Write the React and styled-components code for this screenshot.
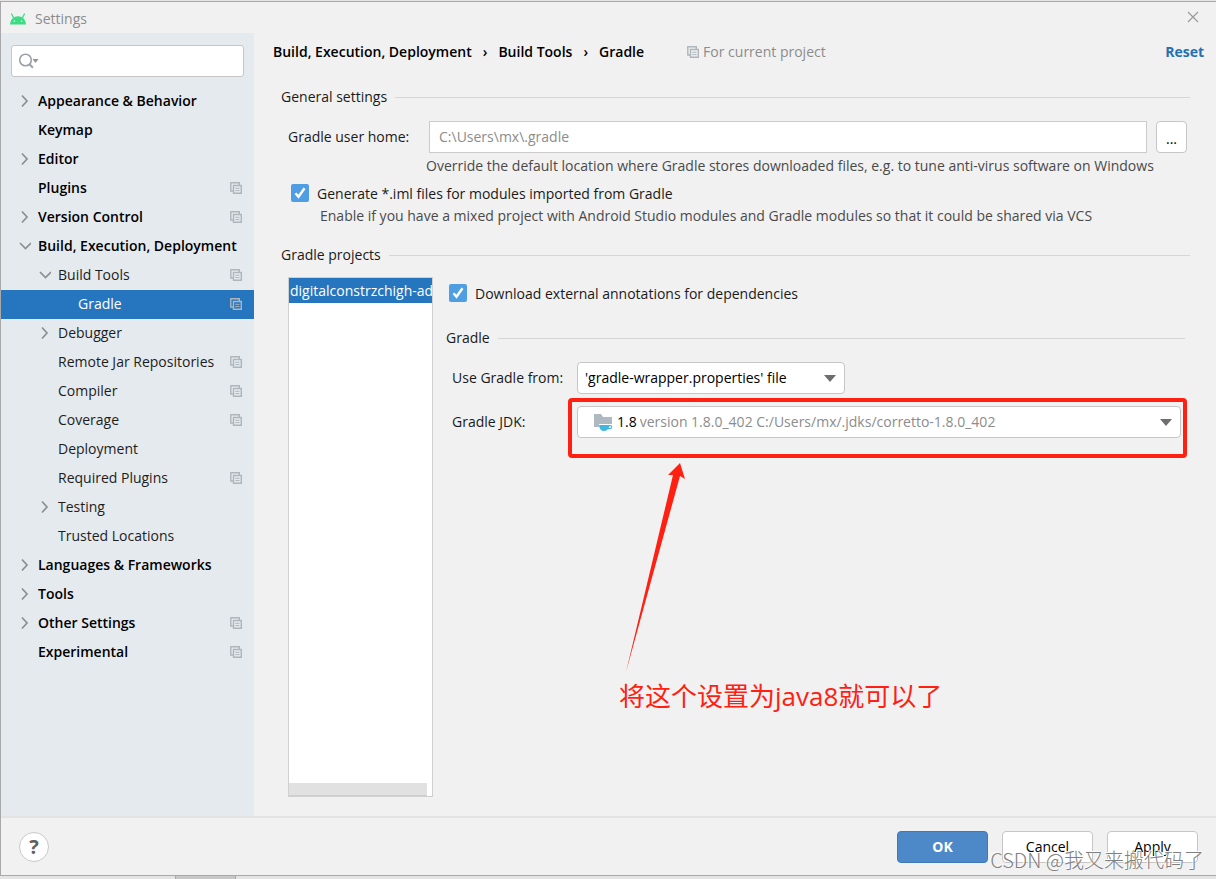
import React from "react";
import styled, { createGlobalStyle, css } from "styled-components";

const GlobalStyle = createGlobalStyle`
  *, *::before, *::after { box-sizing: border-box; }
  body {
    margin: 0;
    background: #e4e4e4;
    color: #1a1a1a;
    font: 14px/20px "Open Sans", "Noto Sans CJK SC", sans-serif;
  }
  button, input, select { font: inherit; color: inherit; margin: 0; }
`;

const Desktop = styled.div`
  min-height: 100vh;
  padding-top: 1px;
  display: flex;
  flex-direction: column;
`;

const Dialog = styled.div`
  flex: 1;
  display: flex;
  flex-direction: column;
  background: #f1f1f1;
  border: 1px solid #a9a9a9;
  border-right: 0;
`;

const TaskStrip = styled.div`
  height: 3px;
  padding-left: 175px;
`;

const TaskSlot = styled.div`
  width: 61px;
  height: 3px;
  background: #c8c8c8;
  border: solid #a9a9a9;
  border-width: 0 1px;
`;

const TitleBar = styled.header`
  height: 31px;
  padding: 0 17px 2px 8px;
  display: flex;
  align-items: center;
  justify-content: space-between;
`;

const TitleText = styled.h1`
  margin: 0;
  display: flex;
  align-items: center;
  gap: 8px;
  font-size: 14px;
  font-weight: 400;
  color: #8c8c8c;
  padding-top: 4px;
`;

const PlainButton = styled.button`
  border: 0;
  padding: 0;
  background: none;
  display: flex;
  cursor: pointer;
`;

const Body = styled.div`
  flex: 1;
  display: flex;
`;

const Sidebar = styled.nav`
  width: 253px;
  flex: none;
  padding-top: 12px;
  background: #e5eaee;
`;

const SearchBox = styled.label`
  height: 32px;
  margin: 0 10px 10px;
  padding-left: 6px;
  display: flex;
  align-items: center;
  background: #fff;
  border: 1px solid #c6c6c6;
  border-radius: 3px;
`;

const SearchInput = styled.input`
  flex: 1;
  min-width: 0;
  border: 0;
  outline: 0;
  background: none;
`;

const Tree = styled.ul`
  list-style: none;
  margin: 0;
  padding: 0;
`;

const TreeRow = styled.li`
  height: 29px;
  padding: 0 12px 2px ${(p) => 14 + p.$level * 20}px;
  display: flex;
  align-items: center;
  white-space: nowrap;
  font-weight: ${(p) => (p.$level === 0 ? 600 : 400)};
  color: ${(p) => (p.$level === 0 ? "#000" : "#1d1d1d")};
  ${(p) =>
    p.$selected &&
    css`
      background: #2675bf;
      color: #fff;
    `}
`;

const Twisty = styled.span`
  width: 23px;
  flex: none;
  display: flex;
`;

const TreeLink = styled.a`
  flex: 1;
  color: inherit;
  text-decoration: none;
`;

const Main = styled.main`
  flex: 1;
  min-width: 0;
  display: flex;
  flex-direction: column;
  padding: 0 12px 19px 19px;
`;

const PageHeader = styled.div`
  height: 38px;
  display: flex;
  align-items: center;
`;

const Crumbs = styled.ol`
  list-style: none;
  margin: 0;
  padding: 0;
  display: flex;
  font-weight: 600;
  color: #000;
`;

const Crumb = styled.li`
  display: flex;
  & + &::before {
    content: "›";
    padding: 0 11px;
  }
`;

const Scope = styled.span`
  margin-left: 43px;
  display: flex;
  align-items: center;
  gap: 4px;
  color: #8c8c8c;
`;

const ResetLink = styled.a`
  margin-left: auto;
  font-weight: 700;
  color: #2470b3;
  text-decoration: none;
`;

const SectionTitle = styled.h2`
  margin: ${(p) => p.$margin};
  display: flex;
  align-items: center;
  gap: 8px;
  font-size: 14px;
  font-weight: 400;
  white-space: nowrap;
  &::after {
    content: "";
    flex: 1;
    height: 1px;
    background: #d6d6d6;
  }
`;

const Fields = styled.div`
  padding: 0 17px 0 15px;
`;

const FieldRow = styled.div`
  display: flex;
  align-items: center;
  height: 32px;
`;

const FieldLabel = styled.label`
  width: ${(p) => p.$width}px;
  flex: none;
  white-space: nowrap;
`;

const PathInput = styled.input`
  flex: 1;
  min-width: 0;
  height: 32px;
  padding: 0 9px 2px;
  border: 1px solid #cbcbcb;
  background: #fff;
  color: #8c8c8c;
`;

const BrowseButton = styled.button`
  width: 31px;
  height: 32px;
  margin-left: 9px;
  padding: 4px 0 0;
  background: #fff;
  border: 1px solid #c6c6c6;
  border-radius: 4px;
  color: #000;
`;

const Hint = styled.p`
  margin: 0;
  padding: ${(p) => p.$padding};
  color: #4a4a4a;
  white-space: nowrap;
`;

const CheckLabel = styled.label`
  display: flex;
  align-items: flex-start;
  gap: 8px;
  padding-left: 3px;
`;

const CheckBox = styled.input`
  appearance: none;
  width: 18px;
  height: 18px;
  border-radius: 2px;
  background: #4f9ee3
    url("data:image/svg+xml,%3Csvg xmlns='http://www.w3.org/2000/svg' viewBox='0 0 18 18'%3E%3Cpath d='M4.5 9.3l3 3.4 6-8.4' fill='none' stroke='white' stroke-width='2.4'/%3E%3C/svg%3E");
`;

const Projects = styled.div`
  flex: 1;
  display: flex;
  margin-top: 12px;
  padding: 0 19px 0 15px;
  gap: 13px;
`;

const ProjectList = styled.div`
  width: 145px;
  flex: none;
  display: flex;
  flex-direction: column;
  justify-content: space-between;
  background: #fff;
  border: 1px solid #d0d0d0;
  overflow: hidden;
`;

const ProjectItem = styled.div`
  height: 25px;
  padding: 3px 1px 0;
  overflow: hidden;
  white-space: nowrap;
  background: #2675bf;
  color: #fff;
`;

const ScrollThumb = styled.div`
  width: 138px;
  height: 13px;
  background: #e1e1e1;
  border-bottom: 1px solid #cfcfcf;
`;

const ProjectForm = styled.div`
  flex: 1;
  min-width: 0;
  padding-top: 7px;
`;

const ProjectFields = styled.div`
  display: flex;
  flex-direction: column;
  gap: 12px;
  padding: 0 4px 0 6px;
`;

const Combo = styled.div`
  position: relative;
  height: 32px;
  display: flex;
  align-items: center;
  padding-left: ${(p) => p.$indent}px;
  background: #fff;
  border: 1px solid #c6c6c6;
  border-radius: 4px;
  ${(p) => (p.$width ? `width: ${p.$width}px;` : "flex: 1; min-width: 0;")}
`;

const ComboSelect = styled.select`
  appearance: none;
  flex: 1;
  min-width: 0;
  height: 30px;
  padding: 0 30px 0 ${(p) => (p.$muted ? 3 : 0)}px;
  border: 0;
  outline: 0;
  color: ${(p) => (p.$muted ? "#8c8c8c" : "#000")};
  background: url("data:image/svg+xml,%3Csvg xmlns='http://www.w3.org/2000/svg' width='12' height='7'%3E%3Cpath d='M0 0h12L6 7z' fill='%236e6e6e'/%3E%3C/svg%3E")
    no-repeat right 8px center;
`;

const JdkName = styled.span`
  padding-left: 4px;
  color: #000;
`;

const Highlight = styled.div`
  position: absolute;
  inset: -9px -7px -21px -10px;
  border: 4px solid #ff2012;
  border-radius: 4px;
  pointer-events: none;
`;

const Callout = styled.div`
  position: absolute;
  top: 56px;
  left: 41px;
  color: #ff2012;
  font-size: 26px;
  line-height: 36px;
  white-space: nowrap;
  pointer-events: none;
`;

const CalloutArrow = styled.svg`
  display: block;
  margin-bottom: 5px;
`;

const Footer = styled.footer`
  position: relative;
  height: 59px;
  padding: 0 18px;
  display: flex;
  align-items: center;
  gap: 14px;
  border-top: 2px solid #e1e3e4;
`;

const HelpButton = styled.button`
  width: 30px;
  height: 30px;
  margin-right: auto;
  padding: 0;
  border: 1px solid #c9c9c9;
  border-radius: 50%;
  background: #fff;
  color: #5f5f5f;
  font-size: 20px;
  font-weight: 700;
`;

const ActionButton = styled.button`
  width: 91px;
  height: 32px;
  padding: 0;
  border-radius: 4px;
  border: 1px solid ${(p) => (p.$primary ? "#3f79b8" : "#c6c6c6")};
  background: ${(p) => (p.$primary ? "#4d89c9" : "#fff")};
  color: ${(p) => (p.$primary ? "#fff" : "#000")};
  font-weight: ${(p) => (p.$primary ? 700 : 400)};
`;

const Watermark = styled.span`
  position: absolute;
  right: 12px;
  bottom: 2px;
  font-family: "Noto Sans CJK SC", sans-serif;
  font-size: 20px;
  line-height: 26px;
  font-weight: 300;
  color: #808080;
  text-shadow: -1px -1px 0 #fff;
  white-space: nowrap;
  pointer-events: none;
`;

const AndroidLogo = () => (
  <svg width="18" height="12" viewBox="0 0 18 12" aria-hidden="true">
    <path d="M1 11.5C1.4 6 5 3.2 9 3.2s7.6 2.8 8 8.3z" fill="#3ddc84" />
    <path d="M4.8 5.2L2.6 1M13.2 5.2L15.4 1" stroke="#3ddc84" strokeWidth="1.3" strokeLinecap="round" />
    <circle cx="5.4" cy="8.2" r=".8" fill="#fff" />
    <circle cx="12.6" cy="8.2" r=".8" fill="#fff" />
  </svg>
);

const CloseIcon = () => (
  <svg width="12" height="12" viewBox="0 0 12 12" aria-hidden="true">
    <path d="M1 1l10 10M11 1L1 11" stroke="#9a9a9a" strokeWidth="1.2" />
  </svg>
);

const SearchIcon = () => (
  <svg width="22" height="16" viewBox="0 0 22 16" aria-hidden="true">
    <circle cx="7.5" cy="7" r="5.8" fill="none" stroke="#9aa1a8" strokeWidth="1.6" />
    <path d="M11.5 11.2l3.4 3.6" stroke="#9aa1a8" strokeWidth="2" />
    <path d="M14.5 6h6l-3 4z" fill="#8f969c" />
  </svg>
);

const Chevron = ({ open }) => (
  <svg width="16" height="14" viewBox="0 0 16 14" fill="none" stroke="#8b8f92" strokeWidth="1.7" aria-hidden="true">
    <path d={open ? "M5 4l5.5 5.5L16 4" : "M7 1.5L12 7l-5 5.5"} />
  </svg>
);

const CopyIcon = () => (
  <svg width="12" height="12" viewBox="0 0 12 12" fill="none" stroke="#aeb6bc" aria-hidden="true">
    <path d="M3 9H.8V.7h8.5V3" strokeWidth="1.4" />
    <path d="M3.5 3.5h7.8v7.8H3.5z" strokeWidth="1.4" />
    <path d="M5.3 6.3h4.2M5.3 8.6h4.2" strokeWidth="1" />
  </svg>
);

const JdkIcon = () => (
  <svg width="19" height="18" viewBox="0 0 19 18" aria-hidden="true">
    <path d="M0 1h7l2 3h9v7H5v3H0z" fill="#afb9c1" />
    <path d="M5 12h11.2a2 2 0 0 1 0 4.2h-2.4Q12.8 18 10.2 18 5.6 18 5 12z" fill="#40b6e0" />
    <path d="M15.2 13.2h1.2a.8.8 0 0 1 0 1.7h-1.6z" fill="#fff" />
  </svg>
);

const treeItems = [
  { label: "Appearance & Behavior", level: 0, open: false },
  { label: "Keymap", level: 0 },
  { label: "Editor", level: 0, open: false },
  { label: "Plugins", level: 0, project: true },
  { label: "Version Control", level: 0, open: false, project: true },
  { label: "Build, Execution, Deployment", level: 0, open: true },
  { label: "Build Tools", level: 1, open: true, project: true },
  { label: "Gradle", level: 2, project: true, selected: true },
  { label: "Debugger", level: 1, open: false },
  { label: "Remote Jar Repositories", level: 1, project: true },
  { label: "Compiler", level: 1, project: true },
  { label: "Coverage", level: 1, project: true },
  { label: "Deployment", level: 1 },
  { label: "Required Plugins", level: 1, project: true },
  { label: "Testing", level: 1, open: false },
  { label: "Trusted Locations", level: 1 },
  { label: "Languages & Frameworks", level: 0, open: false },
  { label: "Tools", level: 0, open: false },
  { label: "Other Settings", level: 0, open: false, project: true },
  { label: "Experimental", level: 0, project: true },
];

export default function App() {
  return (
    <Desktop>
      <GlobalStyle />
      <Dialog>
        <TitleBar>
          <TitleText>
            <AndroidLogo />
            Settings
          </TitleText>
          <PlainButton aria-label="Close">
            <CloseIcon />
          </PlainButton>
        </TitleBar>
        <Body>
          <Sidebar>
            <SearchBox>
              <SearchIcon />
              <SearchInput type="text" aria-label="Search settings" />
            </SearchBox>
            <Tree>
              {treeItems.map((item) => (
                <TreeRow key={item.label} $level={item.level} $selected={item.selected}>
                  <Twisty>{item.open !== undefined && <Chevron open={item.open} />}</Twisty>
                  <TreeLink href="#">{item.label}</TreeLink>
                  {item.project && <CopyIcon />}
                </TreeRow>
              ))}
            </Tree>
          </Sidebar>
          <Main>
            <PageHeader>
              <Crumbs>
                <Crumb>Build, Execution, Deployment</Crumb>
                <Crumb>Build Tools</Crumb>
                <Crumb>Gradle</Crumb>
              </Crumbs>
              <Scope>
                <CopyIcon />
                For current project
              </Scope>
              <ResetLink href="#">Reset</ResetLink>
            </PageHeader>

            <SectionTitle $margin="16px 14px 14px 8px">General settings</SectionTitle>
            <Fields>
              <FieldRow>
                <FieldLabel $width={141} htmlFor="home">Gradle user home:</FieldLabel>
                <PathInput id="home" type="text" defaultValue="C:\Users\mx\.gradle" />
                <BrowseButton aria-label="Browse">...</BrowseButton>
              </FieldRow>
              <Hint $padding="3px 0 8px 138px">
                Override the default location where Gradle stores downloaded files, e.g. to tune anti-virus software on Windows
              </Hint>
              <CheckLabel>
                <CheckBox type="checkbox" defaultChecked />
                Generate *.iml files for modules imported from Gradle
              </CheckLabel>
              <Hint $padding="2px 0 0 32px">
                Enable if you have a mixed project with Android Studio modules and Gradle modules so that it could be shared via VCS
              </Hint>
            </Fields>

            <SectionTitle $margin="19px 14px 0 8px">Gradle projects</SectionTitle>
            <Projects>
              <ProjectList>
                <ProjectItem>digitalconstrzchigh-admin</ProjectItem>
                <ScrollThumb />
              </ProjectList>
              <ProjectForm>
                <CheckLabel>
                  <CheckBox type="checkbox" defaultChecked />
                  Download external annotations for dependencies
                </CheckLabel>
                <SectionTitle $margin="24px 0 14px">Gradle</SectionTitle>
                <ProjectFields>
                  <FieldRow>
                    <FieldLabel $width={125} htmlFor="source">Use Gradle from:</FieldLabel>
                    <Combo $width={268} $indent={7}>
                      <ComboSelect id="source">
                        <option>'gradle-wrapper.properties' file</option>
                      </ComboSelect>
                    </Combo>
                  </FieldRow>
                  <FieldRow>
                    <FieldLabel $width={125} htmlFor="jdk">Gradle JDK:</FieldLabel>
                    <Combo $indent={16}>
                      <JdkIcon />
                      <JdkName>1.8</JdkName>
                      <ComboSelect id="jdk" $muted>
                        <option>version 1.8.0_402 C:/Users/mx/.jdks/corretto-1.8.0_402</option>
                      </ComboSelect>
                      <Highlight />
                      <Callout>
                        <CalloutArrow width="66" height="210" viewBox="0 0 66 210" aria-hidden="true">
                          <path d="M7 209L54 12 49 12 61 0 66 16 61 13z" fill="#ff2012" />
                        </CalloutArrow>
                        将这个设置为java8就可以了
                      </Callout>
                    </Combo>
                  </FieldRow>
                </ProjectFields>
              </ProjectForm>
            </Projects>
          </Main>
        </Body>
        <Footer>
          <HelpButton aria-label="Help">?</HelpButton>
          <ActionButton $primary>OK</ActionButton>
          <ActionButton>Cancel</ActionButton>
          <ActionButton>Apply</ActionButton>
          <Watermark>CSDN @我又来搬代码了</Watermark>
        </Footer>
      </Dialog>
      <TaskStrip>
        <TaskSlot />
      </TaskStrip>
    </Desktop>
  );
}
